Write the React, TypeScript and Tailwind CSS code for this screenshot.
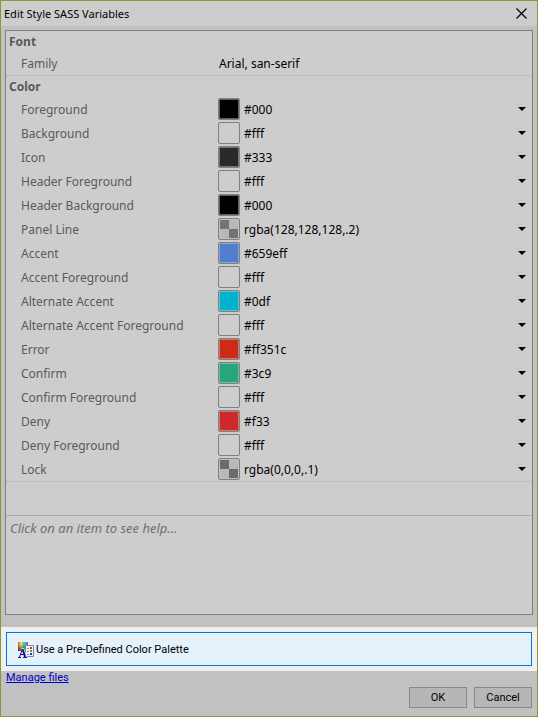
type Variable = {
  id: string;
  label: string;
  value: string;
  swatch: string;
  ring: string;
};

const colors: Variable[] = [
  { id: "foreground", label: "Foreground", value: "#000", swatch: "bg-black", ring: "bg-[#606060]" },
  { id: "background", label: "Background", value: "#fff", swatch: "bg-[#cdcdcd]", ring: "bg-[#cdcdcd]" },
  { id: "icon", label: "Icon", value: "#333", swatch: "bg-[#292929]", ring: "bg-[#757575]" },
  { id: "header-foreground", label: "Header Foreground", value: "#fff", swatch: "bg-[#cdcdcd]", ring: "bg-[#cdcdcd]" },
  { id: "header-background", label: "Header Background", value: "#000", swatch: "bg-black", ring: "bg-[#606060]" },
  { id: "panel-line", label: "Panel Line", value: "rgba(128,128,128,.2)", swatch: "bg-[conic-gradient(#b8b8b8_25%,#747474_0_50%,#b8b8b8_0_75%,#747474_0)]", ring: "bg-[#bfbfbf]" },
  { id: "accent", label: "Accent", value: "#659eff", swatch: "bg-[#517fce]", ring: "bg-[#8fa6cd]" },
  { id: "accent-foreground", label: "Accent Foreground", value: "#fff", swatch: "bg-[#cdcdcd]", ring: "bg-[#cdcdcd]" },
  { id: "alternate-accent", label: "Alternate Accent", value: "#0df", swatch: "bg-[#00b2ce]", ring: "bg-[#6cc0cd]" },
  { id: "alternate-accent-foreground", label: "Alternate Accent Foreground", value: "#fff", swatch: "bg-[#cdcdcd]", ring: "bg-[#cdcdcd]" },
  { id: "error", label: "Error", value: "#ff351c", swatch: "bg-[#ce2b17]", ring: "bg-[#cd7c72]" },
  { id: "confirm", label: "Confirm", value: "#3c9", swatch: "bg-[#29a57c]", ring: "bg-[#7bb9a5]" },
  { id: "confirm-foreground", label: "Confirm Foreground", value: "#fff", swatch: "bg-[#cdcdcd]", ring: "bg-[#cdcdcd]" },
  { id: "deny", label: "Deny", value: "#f33", swatch: "bg-[#ce2929]", ring: "bg-[#cd7b7b]" },
  { id: "deny-foreground", label: "Deny Foreground", value: "#fff", swatch: "bg-[#cdcdcd]", ring: "bg-[#cdcdcd]" },
  { id: "lock", label: "Lock", value: "rgba(0,0,0,.1)", swatch: "bg-[conic-gradient(#b8b8b8_25%,#6b6b6b_0_50%,#b8b8b8_0_75%,#6b6b6b_0)]", ring: "bg-[#bfbfbf]" },
];

function ColorRow({ item }: { item: Variable }) {
  return (
    <div className="flex h-6 items-center pl-[15px] pr-[6px]">
      <label htmlFor={item.id} className="w-[197px] shrink-0 pt-0.5 whitespace-nowrap text-[#5a5a5a]">
        {item.label}
      </label>
      <button
        type="button"
        aria-label={`Pick ${item.label}`}
        className={`size-[22px] shrink-0 rounded-[2px] border border-[#808080] p-px ${item.ring}`}
      >
        <span className={`block size-full ${item.swatch}`} />
      </button>
      <input
        id={item.id}
        defaultValue={item.value}
        className="ml-1 h-5 min-w-0 flex-1 bg-transparent text-black outline-none"
      />
      <button type="button" aria-label={`${item.label} options`} className="flex h-5 w-2 shrink-0 items-center justify-center">
        <svg width="8" height="4" viewBox="0 0 8 4" aria-hidden="true">
          <path d="M0 0h8L4 4Z" fill="#000" />
        </svg>
      </button>
    </div>
  );
}

function PaletteIcon() {
  return (
    <svg width="16" height="16" viewBox="0 0 16 16" aria-hidden="true">
      <defs>
        <linearGradient id="hues">
          <stop offset="0" stopColor="#ed4658" />
          <stop offset=".3" stopColor="#f5e548" />
          <stop offset=".55" stopColor="#42d875" />
          <stop offset=".75" stopColor="#35b9ee" />
          <stop offset="1" stopColor="#a139d8" />
        </linearGradient>
        <linearGradient id="shade" x2="0" y2="1">
          <stop offset=".3" stopColor="#222" stopOpacity="0" />
          <stop offset="1" stopColor="#222" stopOpacity=".75" />
        </linearGradient>
      </defs>
      <path fill="url(#hues)" d="M0 0h10v9H0z" />
      <path fill="url(#shade)" d="M0 0h10v9H0z" />
      <path fill="#f2f4fa" stroke="#85859b" d="M7.500 3.500h8v11h-8z" />
      <path fill="#8a8a99" d="M8 3h7v1H8zM9 6h2v1H9zM9 9h2v1H9zM9 12h2v1H9z" />
      <path fill="#ed2424" d="M12 5h2v2h-2z" />
      <path fill="#20b43a" d="M12 8h2v2h-2z" />
      <path fill="#2430d8" d="M12 11h2v2h-2z" />
      <path fill="#e5f1fb" d="M0 9h3l1-3h2l3 9v1H0z" />
      <path
        fill="none"
        stroke="#18108f"
        strokeWidth="1"
        d="M1.500 15 4.500 7M2.500 12.500h4M0 15.500h3M5 15.500h4"
      />
      <path fill="none" stroke="#18108f" strokeWidth="2" d="M4.500 7 7.200 15" />
    </svg>
  );
}

const dialogButton =
  "h-[21px] w-[58px] border border-[#888] bg-[#b6b6b6] pt-px font-[Roboto,sans-serif] text-[11px] leading-[18px] text-black";

export default function App() {
  return (
    <main className="flex min-h-screen w-full flex-col border border-[#8f9438] bg-[#c1c1c1] font-['Noto_Sans',sans-serif] text-[12px] leading-4 text-black">
      <header className="flex h-[25px] shrink-0 items-center justify-between bg-[#cdcdcd] pl-[3px] pr-[10px]">
        <h1 className="text-[11px]">Edit Style SASS Variables</h1>
        <button type="button" aria-label="Close">
          <svg width="11" height="11" viewBox="0 0 11 11" aria-hidden="true">
            <path d="m.5.5 10 10m0-10-10 10" stroke="#000" strokeWidth="1.200" />
          </svg>
        </button>
      </header>

      <section className="mx-1 mt-1 mb-3 flex flex-1 flex-col border border-[#808080] bg-[#cdcdcd]">
        <h2 className="h-[21px] pl-[3px] leading-[21px] font-bold text-[#5a5a5a]">Font</h2>
        <div className="flex h-6 items-center border-b border-dotted border-[#acacac] pl-[15px]">
          <label htmlFor="family" className="w-[198px] shrink-0 text-[#5a5a5a]">
            Family
          </label>
          <input
            id="family"
            defaultValue="Arial, san-serif"
            className="h-5 min-w-0 flex-1 bg-transparent text-black outline-none"
          />
        </div>
        <h2 className="h-[21px] pl-[3px] leading-[21px] font-bold text-[#5a5a5a]">Color</h2>
        <div className="border-b border-dotted border-[#acacac]">
          {colors.map((item) => (
            <ColorRow key={item.id} item={item} />
          ))}
        </div>
        <p className="mt-[33px] min-h-[99px] flex-1 border-t border-[#acacac] px-1 pt-1 text-[13px] text-[#707070] italic">
          Click on an item to see help...
        </p>
      </section>

      <div className="shrink-0 bg-[#f0f0f0] px-[5px] pt-[5px] pb-[5px]">
        <button
          type="button"
          className="flex h-[34px] w-full items-center gap-[2px] border border-[#0078d7] bg-[#e5f1fb] pt-0.5 pl-[11px] font-[Roboto,sans-serif] text-[11px]"
        >
          <PaletteIcon />
          Use a Pre-Defined Color Palette
        </button>
      </div>

      <footer className="flex h-[45px] shrink-0 flex-col justify-between px-[5px] pb-2">
        <a href="#files" className="self-start font-[Roboto,sans-serif] text-[11px] leading-[13px] text-[#0000cd] underline">
          Manage files
        </a>
        <div className="flex justify-end gap-[7px]">
          <button type="button" className={dialogButton}>
            OK
          </button>
          <button type="button" className={dialogButton}>
            Cancel
          </button>
        </div>
      </footer>
    </main>
  );
}
